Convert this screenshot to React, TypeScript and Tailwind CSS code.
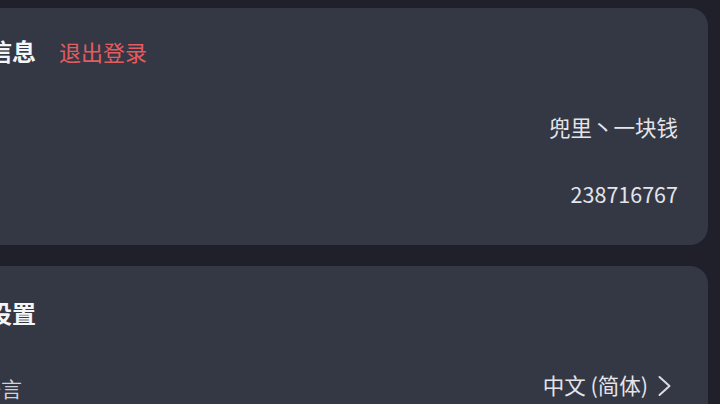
import { Globe, Palette } from "lucide-react"

const font = { fontFamily: '"Noto Sans CJK SC", "Noto Sans", sans-serif' }

const Chevron = () => (
  <svg width="20" height="22" viewBox="0 0 20 22" fill="none">
    <path
      d="M1.5 2 L11.5 11 L1.5 20"
      stroke="#d9dbe1"
      strokeWidth="2"
      strokeLinecap="round"
      strokeLinejoin="round"
    />
  </svg>
)

const Row = ({
  icon,
  label,
  children,
}: {
  icon?: React.ReactNode
  label: string
  children: React.ReactNode
}) => (
  <div className="flex h-[67px] items-center justify-between">
    <div className="flex items-center gap-4 text-[21px] text-[#cfd1d8]">
      {icon && <span className="text-[#9a9dab]">{icon}</span>}
      <span className="mt-[6px]">{label}</span>
    </div>
    <div className="flex items-center gap-[10px] text-[21.5px] text-[#e4e5ea]">
      {children}
    </div>
  </div>
)

export default function App() {
  return (
    <div
      className="h-[404px] w-[720px] overflow-hidden bg-[#1f2029]"
      style={font}
    >
      <div className="ml-[-90px] mr-[12px] flex flex-col gap-[21px] pt-[8px]">
        <section className="rounded-[18px] bg-[#343744] px-[30px] pb-[17px] pt-5">
          <div className="flex h-[46px] items-center">
            <h2 className="text-[24px] font-bold text-[#f4f5f7]">账号信息</h2>
            <button className="ml-[23px] text-[22px] text-[#e45c5f]">
              退出登录
            </button>
          </div>
          <div className="mt-5">
            <Row label="昵称">兜里丶一块钱</Row>
            <Row label="账号">238716767</Row>
          </div>
        </section>

        <section className="rounded-[18px] bg-[#343744] px-[30px] pb-[17px] pt-6">
          <div className="flex h-[46px] items-center">
            <h2 className="text-[24px] font-bold text-[#f4f5f7]">通用设置</h2>
          </div>
          <div className="mt-4">
            <Row icon={<Globe size={24} />} label="语言">
              <span>中文 (简体)</span>
              <Chevron />
            </Row>
            <Row icon={<Palette size={24} />} label="主题">
              <span>深色</span>
              <Chevron />
            </Row>
          </div>
        </section>
      </div>
    </div>
  )
}
